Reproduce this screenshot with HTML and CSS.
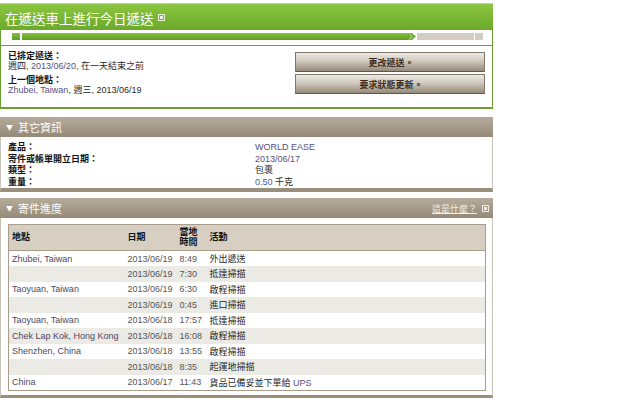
FILE: index.html
```html
<!DOCTYPE html>
<html lang="zh-Hant">
<head>
	<meta charset="UTF-8">
	<meta name="viewport" content="width=device-width, initial-scale=1.0">
	<title>寄件追蹤</title>
	<link rel="stylesheet" href="styles.css">
</head>
<body>
	<div class="page">
		<div class="panel panel-green">
			<div class="green-head">
				<h1>在遞送車上進行今日遞送</h1>
				<svg class="popup-icon" width="7" height="7" viewBox="0 0 7 7"><rect x="0.5" y="0.5" width="6" height="6" fill="none" stroke="#e8f3d8"/><rect x="2" y="2" width="3" height="3" fill="#e8f3d8"/></svg>
			</div>
			<div class="progress">
				<span class="step-start"></span>
				<span class="step-done"></span>
				<svg class="step-arrow" width="8" height="7" viewBox="0 0 8 7"><polygon points="0,0 4,0 8,3.5 4,7 0,7" fill="#6cab2c"/><polyline points="1,0.5 4,3.5 1,6.5" fill="none" stroke="#d8ecc2" stroke-width="1"/></svg>
				<span class="step-left"></span>
				<span class="step-end"></span>
			</div>
			<div class="delivery">
				<div class="delivery-info">
					<div class="info-block">
						<div class="label">已排定遞送：</div>
						<div>週四, <span class="link">2013/06/20</span>, 在一天結束之前</div>
					</div>
					<div class="info-block">
						<div class="label">上一個地點：</div>
						<div><span class="link">Zhubei, Taiwan</span>, 週三, 2013/06/19</div>
					</div>
				</div>
				<div class="actions">
					<a href="#" class="btn">更改遞送 <span class="arr">»</span></a>
					<a href="#" class="btn">要求狀態更新 <span class="arr">»</span></a>
				</div>
			</div>
		</div>

		<div class="panel panel-brown">
			<div class="brown-head">
				<h2><span class="tri">▼</span>其它資訊</h2>
			</div>
			<div class="details">
				<div class="label">產品：</div><div class="link">WORLD EASE</div>
				<div class="label">寄件或帳單開立日期：</div><div class="link">2013/06/17</div>
				<div class="label">類型：</div><div>包裹</div>
				<div class="label">重量：</div><div><span class="num">0.50</span> 千克</div>
			</div>
		</div>

		<div class="panel panel-brown panel-last">
			<div class="brown-head">
				<h2><span class="tri">▼</span>寄件進度</h2>
				<a href="#" class="head-link">這是什麼？</a>
				<svg class="popup-icon" width="7" height="7" viewBox="0 0 7 7"><rect x="0.5" y="0.5" width="6" height="6" fill="none" stroke="#f1ede6"/><rect x="2" y="2" width="3" height="3" fill="#f1ede6"/></svg>
			</div>
			<div class="track">
				<table class="track-table">
					<colgroup>
						<col class="c-loc"><col class="c-date"><col class="c-time"><col>
					</colgroup>
					<thead>
						<tr><th>地點</th><th>日期</th><th>當地<br>時間</th><th>活動</th></tr>
					</thead>
					<tbody>
						<tr><td class="loc">Zhubei, Taiwan</td><td class="date">2013/06/19</td><td class="date">8:49</td><td>外出遞送</td></tr>
						<tr><td></td><td class="date">2013/06/19</td><td class="date">7:30</td><td>抵達掃描</td></tr>
						<tr><td class="loc">Taoyuan, Taiwan</td><td class="date">2013/06/19</td><td class="date">6:30</td><td>啟程掃描</td></tr>
						<tr><td></td><td class="date">2013/06/19</td><td class="date">0:45</td><td>進口掃描</td></tr>
						<tr><td class="loc">Taoyuan, Taiwan</td><td class="date">2013/06/18</td><td class="date">17:57</td><td>抵達掃描</td></tr>
						<tr><td class="loc">Chek Lap Kok, Hong Kong</td><td class="date">2013/06/18</td><td class="date">16:08</td><td>啟程掃描</td></tr>
						<tr><td class="loc">Shenzhen, China</td><td class="date">2013/06/18</td><td class="date">13:55</td><td>啟程掃描</td></tr>
						<tr><td></td><td class="date">2013/06/18</td><td class="date">8:35</td><td>起運地掃描</td></tr>
						<tr><td class="loc">China</td><td class="date">2013/06/17</td><td class="date">11:43</td><td>貨品已備妥並下單給 <span class="link">UPS</span></td></tr>
					</tbody>
				</table>
			</div>
		</div>
	</div>
</body>
</html>
```

FILE: styles.css
```css
* {
	box-sizing: border-box;
}
body {
	margin: 0;
	background-color: white;
	font-family: "Liberation Sans", "Noto Sans CJK TC", sans-serif;
	font-size: 9px;
	color: #2a2a2a;
}
.page {
	width: 493px;
	padding-top: 3px;
}
.link {
	color: #58507e;
}
.num {
	color: #3b5fa8;
}
.label {
	font-weight: bold;
	color: #111;
}

/* green panel */
.panel-green {
	border-left: 1px solid #6b9f30;
	border-right: 1px solid #6b9f30;
	border-bottom: 2px solid #6b9f30;
}
.green-head {
	display: flex;
	align-items: flex-start;
	height: 27px;
	margin: 0 -1px;
	padding: 5px 0 0 5px;
	background: linear-gradient(#8bc540, #6ca92b);
	border-top: 1px solid #b7d98e;
}
.green-head h1 {
	margin: 0;
	font-size: 13.5px;
	font-weight: normal;
	line-height: 18px;
	color: white;
	font-family: "Noto Sans CJK TC", sans-serif;
}
.popup-icon {
	margin: 5px 0 0 4px;
}
.progress {
	display: flex;
	align-items: center;
	height: 16px;
	padding: 0 0 2px 11px;
	border-bottom: 1px solid #6b9f30;
}
.progress span {
	height: 7px;
}
.step-start {
	width: 8px;
	margin-right: 2px;
	background: linear-gradient(#86c340, #5e9c22);
}
.step-done {
	width: 386px;
	background: linear-gradient(#86c340, #5e9c22);
}
.step-left {
	width: 57px;
	margin-left: 1px;
	background-color: #d4cdc3;
}
.step-end {
	width: 8px;
	margin-left: 1px;
	background-color: #d4cdc3;
}
.delivery {
	display: flex;
	justify-content: space-between;
	height: 61px;
	padding: 5px 7px 0 7px;
}
.delivery-info {
	line-height: 10px;
}
.info-block {
	margin-bottom: 4px;
}
.actions {
	display: flex;
	flex-direction: column;
	gap: 2px;
	padding-top: 1px;
}
.btn {
	display: flex;
	align-items: center;
	justify-content: center;
	width: 190px;
	height: 20px;
	background: linear-gradient(#ece9e4, #cfc8bd 45%, #958a79);
	border: 1px solid #82786a;
	border-bottom-color: #5f564a;
	color: #3a2d20;
	font-weight: bold;
	text-decoration: none;
	font-size: 9px;
}
.btn .arr {
	font-size: 7px;
	margin-left: 3px;
}

/* brown panels */
.panel-brown {
	margin-top: 8px;
	border-left: 1px solid #c9c2b6;
	border-right: 1px solid #c9c2b6;
	border-bottom: 4px solid #9a8f7d;
}
.panel-last {
	margin-top: 6px;
	border-bottom-width: 3px;
}
.brown-head {
	display: flex;
	align-items: center;
	height: 20px;
	margin: 0 -1px;
	padding: 0 4px 0 6px;
	background: linear-gradient(#b6ac9c, #958a78);
}
.brown-head h2 {
	flex: 1;
	margin: 0;
	font-size: 11px;
	font-weight: normal;
	color: white;
	font-family: "Noto Sans CJK TC", sans-serif;
}
.tri {
	font-size: 7px;
	margin-right: 5px;
	position: relative;
	top: -2px;
}
.head-link {
	color: #f3efe8;
	font-size: 9px;
}
.brown-head .popup-icon {
	margin: 0 0 0 5px;
}
.details {
	display: grid;
	grid-template-columns: 247px 1fr;
	height: 51px;
	padding: 5px 7px 0 7px;
	line-height: 11px;
}

/* tracking table */
.track {
	padding: 6px 6px 4px 7px;
}
.track-table {
	width: 478px;
	table-layout: fixed;
	border-collapse: collapse;
	border: 1px solid #a89c8a;
}
.c-loc {
	width: 116px;
}
.c-date {
	width: 52px;
}
.c-time {
	width: 30px;
}
.track-table th {
	height: 26px;
	padding: 0 3px;
	text-align: left;
	font-weight: bold;
	line-height: 9.5px;
	color: #111;
	background-color: #d6cfc2;
	border-bottom: 1px solid #a89c8a;
}
.track-table td {
	height: 15.5px;
	padding: 0 3px;
	white-space: nowrap;
	overflow: hidden;
	color: #2a2a2a;
}
.track-table tbody tr:nth-child(even) td {
	background-color: #ebeae5;
}
.track-table td.loc {
	color: #4d4862;
}
.track-table td.date {
	color: #555;
}
```
